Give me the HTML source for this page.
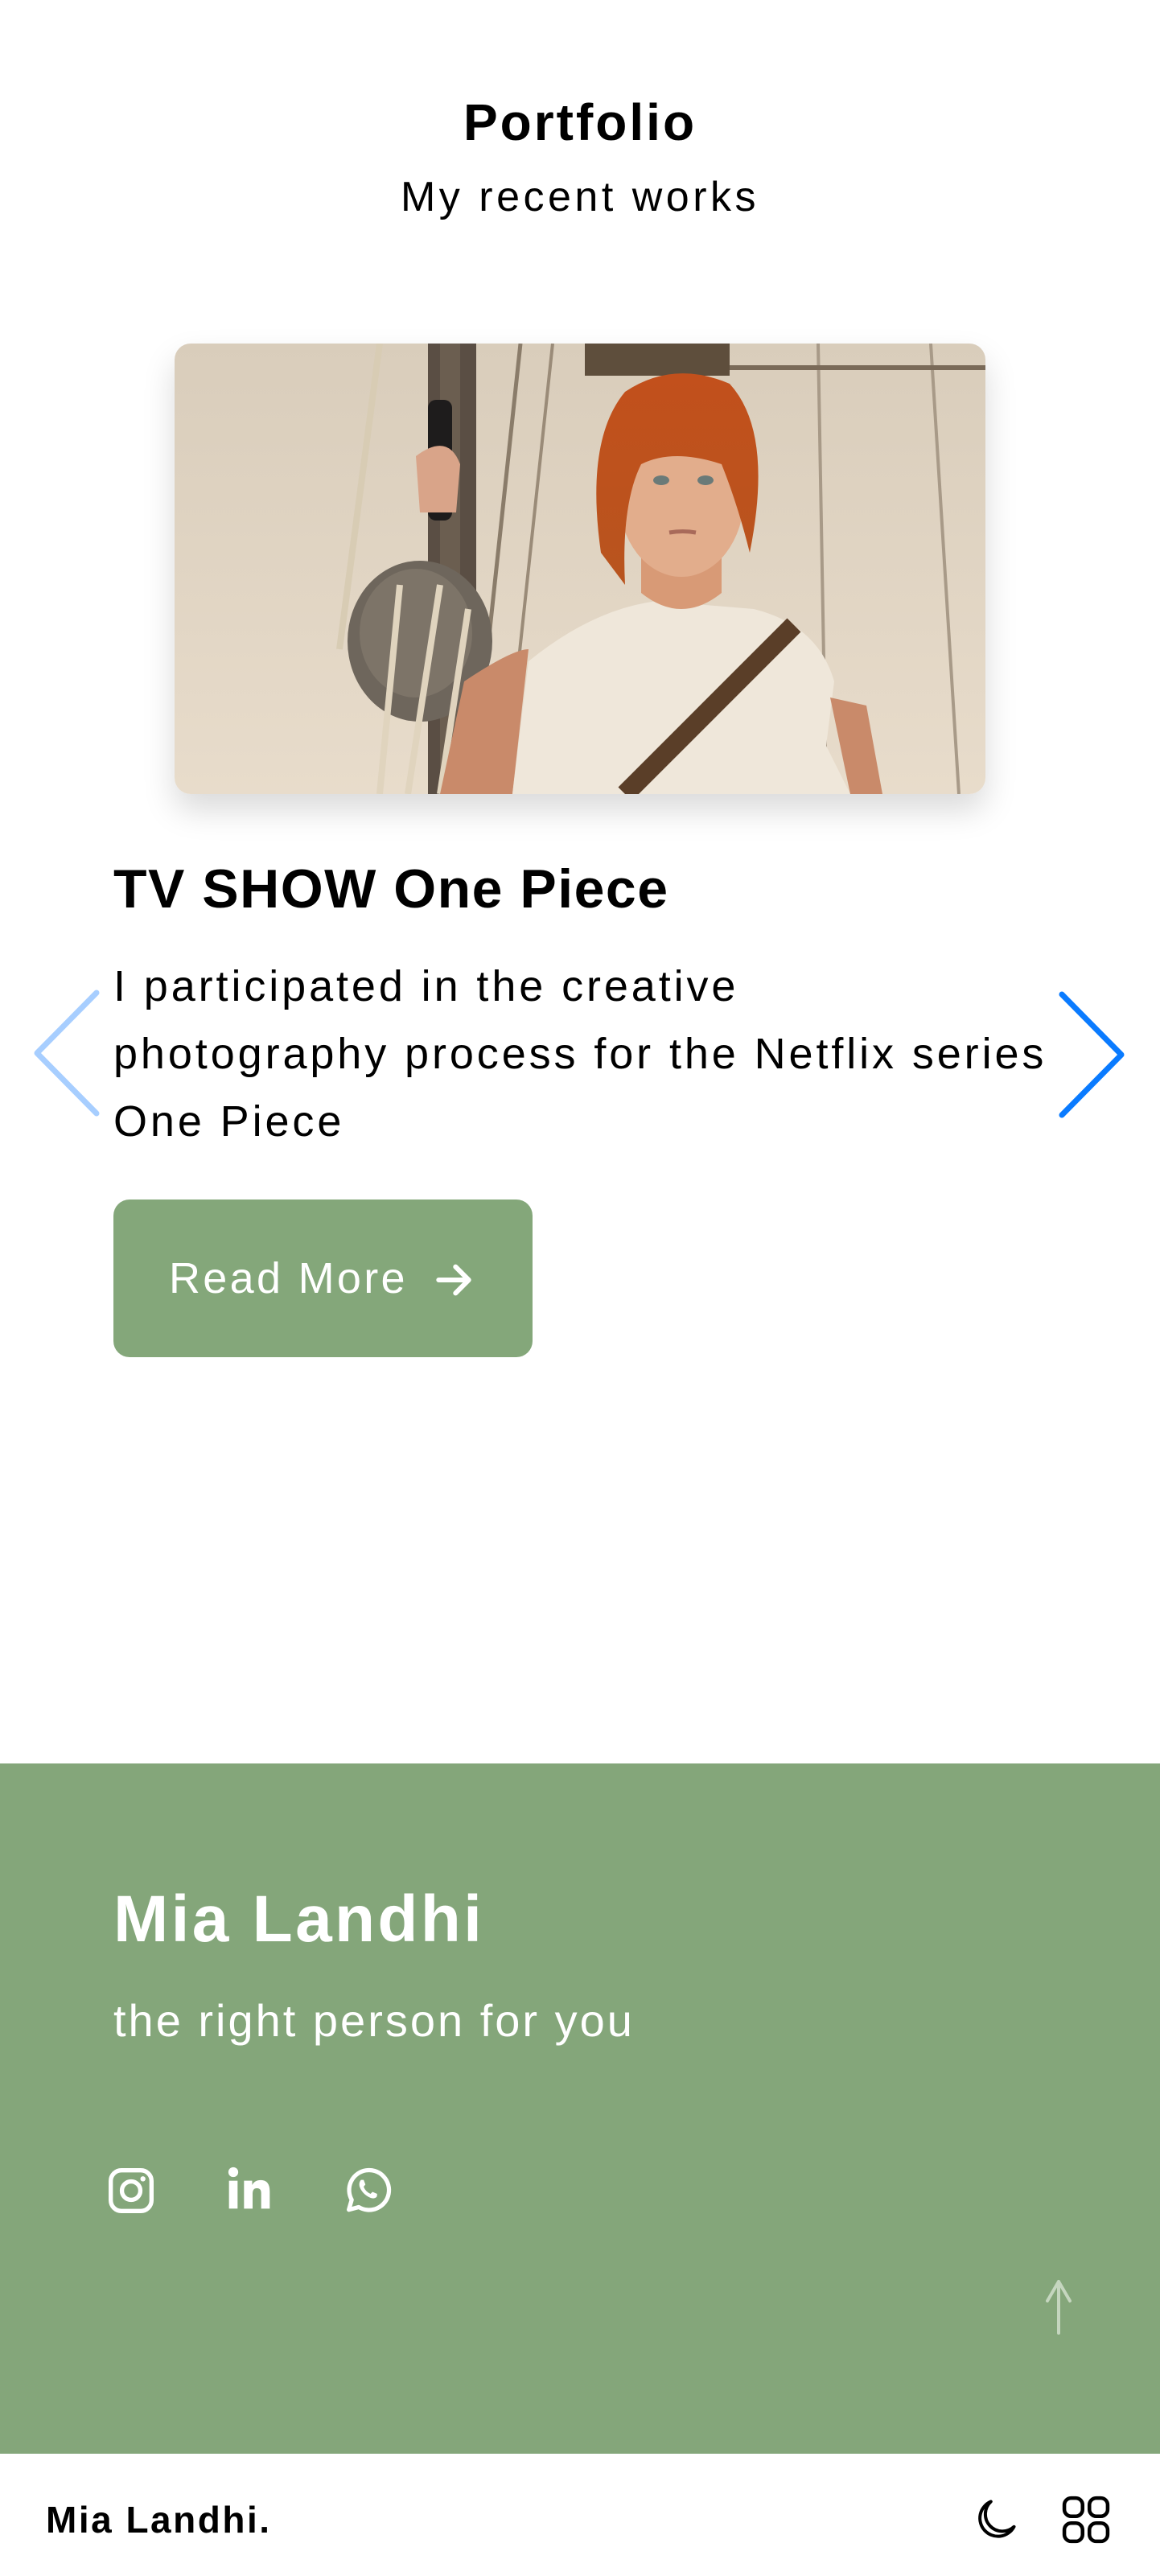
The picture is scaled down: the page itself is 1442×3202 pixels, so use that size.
<!DOCTYPE html>
<html><head><meta charset="utf-8">
<style>
html,body{margin:0;padding:0;background:#fff;}
body{width:1442px;height:3202px;position:relative;overflow:hidden;font-family:"Liberation Sans",sans-serif;color:#000;}
.abs{position:absolute;}
</style></head><body>
<div class="abs" style="left:0;width:1442px;top:112px;text-align:center;font-size:64px;font-weight:bold;line-height:80px;letter-spacing:3px;">Portfolio</div>
<div class="abs" style="left:0;width:1442px;top:210px;text-align:center;font-size:52px;line-height:70px;letter-spacing:4.5px;">My recent works</div>

<div class="abs" style="left:217px;top:427px;width:1008px;height:560px;border-radius:20px;overflow:hidden;box-shadow:0 20px 40px rgba(0,0,0,0.15);">
<svg width="1008" height="560" viewBox="0 0 1008 560">
<defs>
<linearGradient id="sky" x1="0" y1="0" x2="0" y2="1"><stop offset="0" stop-color="#d9cdbb"/><stop offset="1" stop-color="#e8dccb"/></linearGradient>
<linearGradient id="hair" x1="0" y1="0" x2="0" y2="1"><stop offset="0" stop-color="#c2501c"/><stop offset="1" stop-color="#b8541e"/></linearGradient>
</defs>
<rect width="1008" height="560" fill="url(#sky)"/>
<rect x="315" y="0" width="60" height="560" fill="#5a4e44"/>
<rect x="330" y="0" width="25" height="560" fill="#6b5e50"/>
<line x1="430" y1="0" x2="370" y2="560" stroke="#8a7c6a" stroke-width="5"/>
<line x1="470" y1="0" x2="410" y2="560" stroke="#9a8b78" stroke-width="4"/>
<line x1="800" y1="0" x2="810" y2="560" stroke="#a89a88" stroke-width="4"/>
<line x1="940" y1="0" x2="975" y2="560" stroke="#a89a88" stroke-width="4"/>
<line x1="680" y1="30" x2="1008" y2="30" stroke="#7a6a58" stroke-width="6"/>
<rect x="510" y="0" width="180" height="40" fill="#5e4e3c"/>
<line x1="255" y1="0" x2="205" y2="380" stroke="#d8ccb4" stroke-width="8"/>
<rect x="315" y="70" width="30" height="150" rx="10" fill="#1e1c1c"/>
<ellipse cx="305" cy="370" rx="90" ry="100" fill="#6e665c"/>
<ellipse cx="300" cy="360" rx="70" ry="80" fill="#7d7468"/>
<line x1="280" y1="300" x2="255" y2="560" stroke="#e0d4be" stroke-width="8"/>
<line x1="330" y1="300" x2="290" y2="560" stroke="#e0d4be" stroke-width="8"/>
<line x1="365" y1="330" x2="330" y2="560" stroke="#e0d4be" stroke-width="8"/>
<path d="M300 140 Q340 110 355 150 L350 210 L305 210 Z" fill="#d9a489"/>
<path d="M330 560 L360 420 Q420 380 440 380 L420 560 Z" fill="#c98a6a"/>
<path d="M420 560 L440 395 Q520 330 600 320 L720 330 Q800 350 820 420 L810 500 L840 560 Z" fill="#efe7da"/>
<path d="M560 560 L770 350" stroke="#5a3e28" stroke-width="24"/>
<path d="M840 560 L815 440 L860 450 L880 560 Z" fill="#c98a6a"/>
<path d="M580 210 L580 310 Q630 350 680 310 L680 210 Z" fill="#d89a76"/>
<ellipse cx="630" cy="190" rx="78" ry="100" fill="#e2ad8c"/>
<path d="M530 260 Q510 120 560 60 Q620 20 690 50 Q745 110 715 260 Q700 200 680 150 Q620 130 580 150 Q555 200 560 300 Z" fill="url(#hair)"/>
<ellipse cx="605" cy="170" rx="10" ry="6" fill="#6a7a78"/>
<ellipse cx="660" cy="170" rx="10" ry="6" fill="#6a7a78"/>
<path d="M615 235 Q632 232 648 235" stroke="#a86a5a" stroke-width="5" fill="none"/>
</svg>
</div>

<div class="abs" style="left:141px;top:1065px;font-size:68px;font-weight:bold;line-height:80px;letter-spacing:1.5px;">TV SHOW One Piece</div>
<div class="abs" style="left:141px;top:1184px;width:1250px;white-space:nowrap;font-size:54px;line-height:84px;letter-spacing:3.9px;">I participated in the creative<br>photography process for the Netflix series<br>One Piece</div>

<svg class="abs" style="left:36px;top:1228px" width="92" height="162" viewBox="0 0 92 162"><path d="M84 6 L10 81 L84 156" stroke="#a7ceff" stroke-width="7" fill="none" stroke-linecap="round" stroke-linejoin="round"/></svg>
<svg class="abs" style="left:1312px;top:1228px" width="92" height="162" viewBox="0 0 92 162"><path d="M8 8 L82 83 L8 158" stroke="#0a7bff" stroke-width="7" fill="none" stroke-linecap="round" stroke-linejoin="round"/></svg>

<div class="abs" style="left:141px;top:1491px;width:521px;height:196px;border-radius:20px;background:#84a77a;"></div>
<div class="abs" style="left:210px;top:1556px;font-size:54px;line-height:66px;color:#fff;letter-spacing:3.3px;">Read More</div>
<svg class="abs" style="left:536px;top:1563px" width="56" height="56" viewBox="0 0 24 24"><path d="M4 12 H19 M13 5 L20 12 L13 19" stroke="#fff" stroke-width="2.6" fill="none" stroke-linecap="round" stroke-linejoin="round"/></svg>

<div class="abs" style="left:0;top:2192px;width:1442px;height:858px;background:#84a67a;"></div>
<div class="abs" style="left:141px;top:2336px;font-size:82px;font-weight:bold;line-height:100px;color:#fff;letter-spacing:3.3px;">Mia Landhi</div>
<div class="abs" style="left:141px;top:2476px;font-size:56px;line-height:72px;color:#fff;letter-spacing:3px;">the right person for you</div>

<svg class="abs" style="left:131px;top:2690px" width="64" height="66" viewBox="0 0 24 24"><rect x="2.5" y="2.5" width="19" height="19" rx="5" stroke="#fff" stroke-width="2" fill="none"/><circle cx="12" cy="12" r="4.3" stroke="#fff" stroke-width="2" fill="none"/><circle cx="17.5" cy="6.5" r="1.2" fill="#fff"/></svg>
<svg class="abs" style="left:278px;top:2686px" width="64" height="68" viewBox="0 0 24 24"><rect x="2.5" y="8.5" width="4" height="13" fill="#fff"/><circle cx="4.5" cy="4.5" r="2.3" fill="#fff"/><path d="M9.5 8.5 H13.3 V10.5 Q14.5 8.2 17.3 8.2 Q21.5 8.2 21.5 13.5 V21.5 H17.5 V14.3 Q17.5 12 15.5 12 Q13.5 12 13.5 14.5 V21.5 H9.5 Z" fill="#fff"/></svg>
<svg class="abs" style="left:424px;top:2688px" width="66" height="68" viewBox="0 0 24 24"><path d="M3.5 21 L4.8 16.5 A9 9 0 1 1 8 19.8 Z" stroke="#fff" stroke-width="1.9" fill="none" stroke-linejoin="round"/><path d="M9 7.5 Q8 8.5 8.3 10.3 Q9.5 14 13.5 15.7 Q15.3 16.2 16.2 15 L16.3 13.8 L14.2 12.9 L13.3 13.8 Q11 12.8 10.2 10.6 L11 9.6 L10.2 7.5 Z" fill="#fff"/></svg>

<svg class="abs" style="left:1290px;top:2830px" width="52" height="74" viewBox="0 0 52 74"><path d="M26 70 V6 M12 30 L26 6 L40 30" stroke="#c5d6bf" stroke-width="4" fill="none" stroke-linecap="round" stroke-linejoin="round"/></svg>

<div class="abs" style="left:57px;top:3104px;font-size:46px;font-weight:bold;line-height:56px;letter-spacing:2.5px;">Mia Landhi.</div>
<svg class="abs" style="left:1208px;top:3100px" width="60" height="64" viewBox="0 0 24 24"><path d="M9.5 3 A9 9 0 1 0 21 15.5 A7.5 7.5 0 0 1 9.5 3 Z" stroke="#000" stroke-width="1.6" fill="none" stroke-linejoin="round"/></svg>
<svg class="abs" style="left:1316px;top:3098px" width="68" height="68" viewBox="0 0 24 24"><rect x="2.5" y="2.5" width="8" height="8" rx="3" stroke="#000" stroke-width="1.6" fill="none"/><rect x="13.5" y="2.5" width="8" height="8" rx="3" stroke="#000" stroke-width="1.6" fill="none"/><rect x="2.5" y="13.5" width="8" height="8" rx="3" stroke="#000" stroke-width="1.6" fill="none"/><rect x="13.5" y="13.5" width="8" height="8" rx="3" stroke="#000" stroke-width="1.6" fill="none"/></svg>
</body></html>
